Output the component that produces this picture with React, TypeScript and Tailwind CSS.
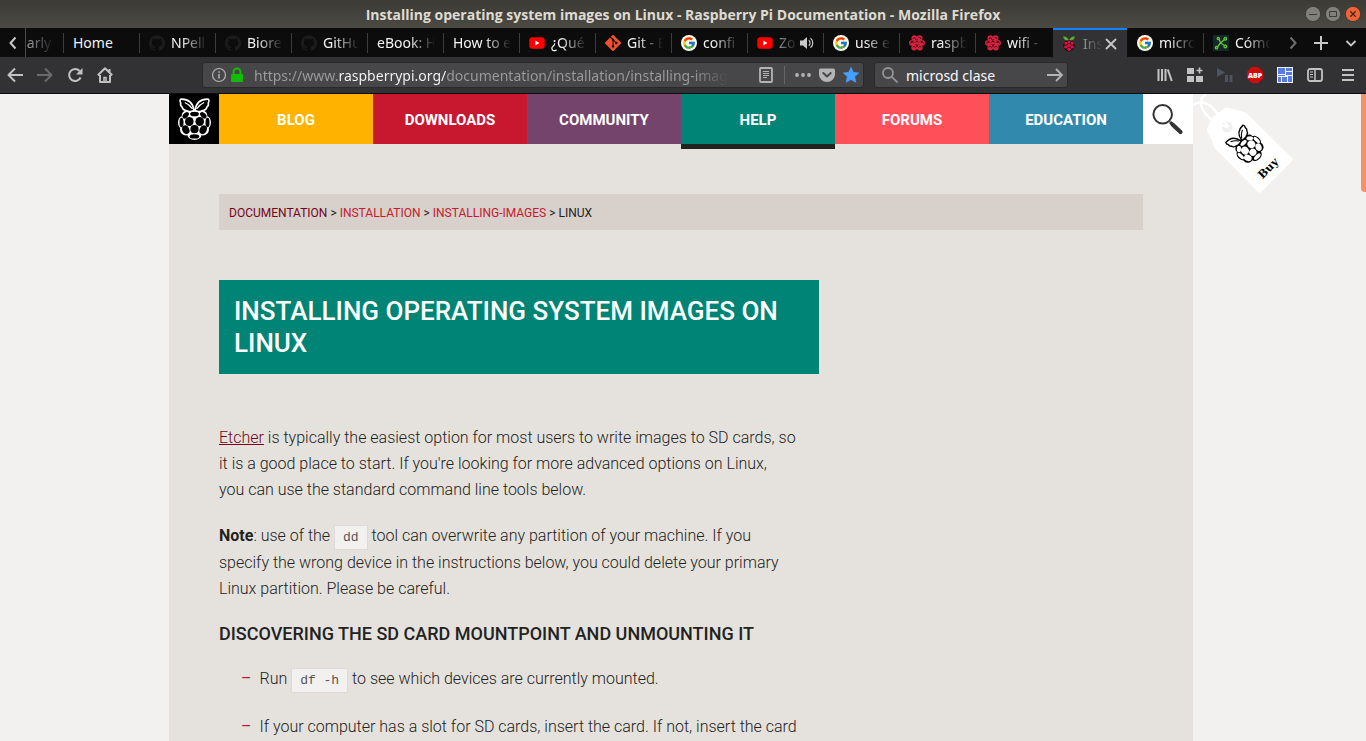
import React from "react";
import { SiGithub, SiGit } from "react-icons/si";
import { FcGoogle } from "react-icons/fc";

type TabData = {
  label: string;
  icon?: React.ReactNode;
  state?: "active" | "audio";
  bare?: boolean;
};

const GithubIcon = () => <SiGithub className="size-4 text-[#1c1c1c]" />;

const GoogleIcon = () => (
  <span className="flex size-4 items-center justify-center rounded-full bg-white">
    <FcGoogle className="size-[14px]" />
  </span>
);

const YoutubeIcon = () => (
  <svg viewBox="0 0 16 16" className="size-4">
    <rect x="0.3" y="2.3" width="15.4" height="11.4" rx="3" fill="#f00" />
    <path d="M6.3 5.6v4.8L10.4 8z" fill="#fff" />
  </svg>
);

const BerryIcon = () => (
  <svg viewBox="0 0 16 16" className="size-4">
    <g fill="#d8223f">
      <circle cx="8" cy="8" r="4" />
      <circle cx="5.4" cy="3.2" r="2.9" />
      <circle cx="10.600" cy="3.2" r="2.9" />
      <circle cx="2.900" cy="7.800" r="2.9" />
      <circle cx="13.100" cy="7.800" r="2.9" />
      <circle cx="5.200" cy="12.600" r="2.9" />
      <circle cx="10.800" cy="12.600" r="2.9" />
    </g>
    <g fill="none" stroke="#1c0408" strokeWidth=".8">
      <path d="M4 3.800c.5-1.500 2.300-1.500 2.500 0s1.500 1.700 2.500.6M9.500 3c1-1 2.600-.4 2.600 1" />
      <path d="M1.600 8.500c0-1.800 2.400-2 2.800-.4M6 7.600c.6-1.600 3.400-1.600 4 0M6.500 9.400c.8.9 2.200.9 3 0M11.700 8c.4-1.400 2.600-1.200 2.700.4" />
      <path d="M3.700 12.300c.8-1.300 2.600-1 2.800.4M9.500 12.700c.2-1.400 2-1.700 2.800-.4M7 11.500c.6-.6 1.400-.6 2 0M4.500 6c-1 .4-1.400.6-2.200.3M11.500 6c1 .4 1.400.6 2.200.3" />
    </g>
  </svg>
);

const RaspberryColorIcon = () => (
  <svg viewBox="0 0 16 16" className="size-4">
    <path d="M7.8 4.6C7.4 2 5 .2 2.200.5c.3 2.600 2.200 4.500 5.600 4.100zM8.200 4.600C8.600 2 11 .2 13.800.5c-.3 2.600-2.200 4.500-5.600 4.100z" fill="#5fb02c" />
    <path d="M8 4.200c3 0 5.600 2.300 5.600 5.400S10.800 15.600 8 15.600 2.400 12.700 2.400 9.600 5 4.200 8 4.200z" fill="#1b060b" />
    <g fill="#e0124a">
      <circle cx="8" cy="9.300" r="1.700" />
      <circle cx="8" cy="5.900" r="1.400" />
      <circle cx="4.900" cy="7.300" r="1.500" />
      <circle cx="11.100" cy="7.300" r="1.500" />
      <circle cx="4.800" cy="10.900" r="1.700" />
      <circle cx="11.200" cy="10.900" r="1.700" />
      <circle cx="8" cy="13.300" r="1.800" />
    </g>
  </svg>
);

const MoleculeIcon = () => (
  <svg viewBox="0 0 16 16" className="size-4">
    <rect width="16" height="16" fill="#16262a" />
    <g stroke="#5fc92e" strokeWidth="1.300" fill="none">
      <path d="M4 12.500 7.500 8 6 4M7.500 8l4-3.500M7.500 8l4 2.500" />
      <circle cx="3.500" cy="12.700" r="1.200" />
      <circle cx="5.300" cy="3.500" r="1.100" />
      <circle cx="12.300" cy="3.800" r="1.300" />
      <circle cx="12.300" cy="11.500" r="1.300" />
    </g>
  </svg>
);

/* Line drawing of a raspberry on a 50x50 grid, in an ink colour over a ground colour. */
function Raspberry({ ink, ground }: { ink: string; ground: string }) {
  return (
    <g>
      <g fill={ink}>
        <circle cx="25.500" cy="28.500" r="13.500" />
        <ellipse cx="13.500" cy="28.500" rx="4.500" ry="6.500" />
        <ellipse cx="37.500" cy="28.500" rx="4.500" ry="6.500" />
        <circle cx="17" cy="35.500" r="6" />
        <circle cx="34" cy="35.500" r="6" />
        <ellipse cx="25.500" cy="41" rx="7" ry="5" />
        <circle cx="17.700" cy="21.500" r="5" />
        <circle cx="33.300" cy="21.500" r="5" />
      </g>
      <g fill={ground}>
        <ellipse cx="20.300" cy="27.500" rx="4.300" ry="4.600" />
        <ellipse cx="30.700" cy="27.500" rx="4.300" ry="4.600" />
        <circle cx="25.500" cy="35.200" r="4.100" />
        <ellipse cx="12.500" cy="28.500" rx="2" ry="4.700" />
        <ellipse cx="38.500" cy="28.500" rx="2" ry="4.700" />
        <ellipse cx="16.800" cy="35.700" rx="3.500" ry="4.500" transform="rotate(-25 16.800 35.700)" />
        <ellipse cx="34.200" cy="35.700" rx="3.500" ry="4.500" transform="rotate(25 34.200 35.700)" />
        <ellipse cx="25.500" cy="42.400" rx="4.800" ry="2.200" />
        <ellipse cx="25.500" cy="20" rx="4.400" ry="2.300" />
        <ellipse cx="16.700" cy="21.300" rx="3.800" ry="2.400" transform="rotate(-45 16.700 21.300)" />
        <ellipse cx="34.300" cy="21.300" rx="3.800" ry="2.400" transform="rotate(45 34.300 21.300)" />
      </g>
      <g fill={ground} stroke={ink} strokeWidth="1.600" strokeLinejoin="round">
        <path d="M25 16.500C24 9.500 19.500 4.800 11.500 5.200c-1 1.500-.8 2.500.2 3.800-.6 2 .2 3.200 1.500 4.200.2 1.800 1.300 2.600 3 3 2.500 1.400 6 1.500 8.800.3z" />
        <path d="M26 16.500C27 9.500 31.500 4.800 39.500 5.200c1 1.500.8 2.500-.2 3.800.6 2-.2 3.200-1.500 4.200-.2 1.800-1.300 2.600-3 3-2.500 1.400-6 1.500-8.800.3z" />
        <path d="M23.500 15C21.500 12 19 9.800 15.800 8.500M27.500 15c2-3 4.500-5.200 7.700-6.500" fill="none" strokeWidth="1.200" />
      </g>
    </g>
  );
}

const tabs: TabData[] = [
  { label: "Home" },
  { label: "NPell", icon: <GithubIcon /> },
  { label: "Biore", icon: <GithubIcon /> },
  { label: "GitHu", icon: <GithubIcon /> },
  { label: "eBook: H" },
  { label: "How to e" },
  { label: "¿Qué", icon: <YoutubeIcon /> },
  { label: "Git - E", icon: <SiGit className="size-4 text-[#f0502f]" /> },
  { label: "confi", icon: <GoogleIcon /> },
  { label: "Zo", icon: <YoutubeIcon />, state: "audio" },
  { label: "use e", icon: <GoogleIcon /> },
  { label: "raspb", icon: <BerryIcon /> },
  { label: "wifi - ", icon: <BerryIcon /> },
  { label: "Ins", icon: <RaspberryColorIcon />, state: "active" },
  { label: "micro", icon: <GoogleIcon />, bare: true },
  { label: "Cómo", icon: <MoleculeIcon /> },
];

const fade = "[mask-image:linear-gradient(to_right,black_calc(100%_-_26px),transparent)]";

function Tab({ tab }: { tab: TabData }) {
  if (tab.state === "active") {
    return (
      <div className="ml-0.5 flex h-full w-[74px] shrink-0 items-center border-t-2 border-[#0a84ff] bg-[#323234] pr-2 pl-2">
        <button className="flex min-w-0 flex-1 items-center gap-[6px]">
          <span className="shrink-0">{tab.icon}</span>
          <span className={`flex-1 overflow-hidden text-left whitespace-nowrap text-[#b8b8ba] ${fade}`}>{tab.label}</span>
        </button>
        <button aria-label="Close tab">
          <svg viewBox="0 0 16 16" className="size-4" stroke="#c8c8c9" strokeWidth="1.800" strokeLinecap="round">
            <path d="M3.500 3.500l9 9M12.500 3.500l-9 9" />
          </svg>
        </button>
      </div>
    );
  }
  return (
    <button className="flex h-full w-[76px] shrink-0 items-center pr-2">
      <span className={tab.bare ? "h-5 w-px" : "h-5 w-px bg-[#3d3d3d]"} />
      {tab.icon && <span className="-mr-[3px] ml-[9px] shrink-0">{tab.icon}</span>}
      <span
        className={`ml-[9px] flex-1 overflow-hidden text-left whitespace-nowrap ${
          tab.label === "Home" ? "" : fade
        } ${tab.state === "audio" ? "text-[#b8b8ba]" : "text-[#f4f4f5]"}`}
      >
        {tab.label}
      </span>
      {tab.state === "audio" && (
        <svg viewBox="0 0 16 16" className="size-4 shrink-0" fill="#c9c9ca">
          <path d="M1 5.500h3L8 2v12L4 10.500H1z" />
          <path d="M9.800 5.300a3.500 3.500 0 0 1 0 5.400M11.500 3.300a6 6 0 0 1 0 9.400" fill="none" stroke="#c9c9ca" strokeWidth="1.200" />
        </svg>
      )}
    </button>
  );
}

function TitleBar() {
  return (
    <header className="grid h-7 shrink-0 grid-cols-[1fr_auto_1fr] items-center bg-gradient-to-b from-[#3b3a35] to-[#4c4a43]">
      <span />
      <h1 className="[font-family:'Open_Sans',sans-serif] text-[14px] font-bold text-[#dfdbd2]">
        Installing operating system images on Linux - Raspberry Pi Documentation - Mozilla Firefox
      </h1>
      <div className="flex justify-end gap-1 pr-[5px]">
        <button aria-label="Minimize">
          <svg viewBox="0 0 16 16" className="size-4">
            <circle cx="8" cy="8" r="7.600" fill="#82807a" stroke="#33322d" strokeWidth=".7" />
            <path d="M4 8.500h8" stroke="#3c3b37" />
          </svg>
        </button>
        <button aria-label="Maximize">
          <svg viewBox="0 0 16 16" className="size-4">
            <circle cx="8" cy="8" r="7.600" fill="#82807a" stroke="#33322d" strokeWidth=".7" />
            <path d="M4.500 5.500h7v5h-7z" fill="none" stroke="#3c3b37" />
          </svg>
        </button>
        <button aria-label="Close">
          <svg viewBox="0 0 16 16" className="size-4">
            <circle cx="8" cy="8" r="7.600" fill="#ee6436" stroke="#33322d" strokeWidth=".7" />
            <path d="M5.300 5.300l5.400 5.400M10.700 5.300l-5.400 5.400" stroke="#4a2312" strokeWidth="1.300" />
          </svg>
        </button>
      </div>
    </header>
  );
}

function TabBar() {
  return (
    <div className="flex h-[29px] shrink-0 bg-[#0c0c0d] text-[14px]">
      <button aria-label="Scroll tabs left" className="flex w-[26px] shrink-0 items-center justify-center border-r border-[#4a4a4b]">
        <svg viewBox="0 0 16 16" className="size-4" fill="none" stroke="#c8c8c9" strokeWidth="2">
          <path d="M10.500 2.500 5.500 8l5 5.500" />
        </svg>
      </button>
      <div className="flex min-w-0 flex-1 overflow-hidden">
        <div className="-ml-[39px] flex shrink-0">
          <button className="flex w-[76px] items-center pr-2 pl-8">
            <span className={`flex-1 overflow-hidden text-left whitespace-nowrap text-[#9a9a9c] ${fade}`}>Early</span>
          </button>
          {tabs.map((t, i) => (
            <Tab key={i} tab={t} />
          ))}
        </div>
      </div>
      <button aria-label="Scroll tabs right" className="flex w-7 shrink-0 items-center justify-center">
        <svg viewBox="0 0 16 16" className="size-4" fill="none" stroke="#6f6f71" strokeWidth="2">
          <path d="M5.500 2.500l5 5.500-5 5.500" />
        </svg>
      </button>
      <button aria-label="New tab" className="flex w-7 shrink-0 items-center justify-center">
        <svg viewBox="0 0 16 16" className="size-4" stroke="#c8c8c9" strokeWidth="2">
          <path d="M8 1v14M1 8h14" />
        </svg>
      </button>
      <button aria-label="List all tabs" className="flex w-[31px] shrink-0 items-center justify-center">
        <svg viewBox="0 0 16 16" className="size-4" fill="none" stroke="#c8c8c9" strokeWidth="1.800">
          <path d="M3.500 6 8 10.500 12.500 6" />
        </svg>
      </button>
    </div>
  );
}

function ToolButton({ label, children }: { label: string; children: React.ReactNode }) {
  return (
    <button aria-label={label} className="flex w-[30px] shrink-0 items-center justify-center">
      <svg viewBox="0 0 16 16" className="size-4" fill="none" stroke="#c2c2c3" strokeWidth="2">
        {children}
      </svg>
    </button>
  );
}

function Toolbar() {
  return (
    <div className="flex h-[37px] shrink-0 border-b border-[#0c0c0d] bg-[#323234] text-[14px]">
      <ToolButton label="Back">
        <path d="M16 8H1.500M8 1.500 1.500 8 8 14.500" strokeLinejoin="round" />
      </ToolButton>
      <ToolButton label="Forward">
        <path d="M0 8h14.500M8 1.500 14.500 8 8 14.500" stroke="#6b6b6d" strokeLinejoin="round" />
      </ToolButton>
      <ToolButton label="Reload">
        <path d="M13.600 10.500A6 6 0 1 1 12.600 4" />
        <path d="M15.500 1v6.500H9z" fill="#c2c2c3" stroke="none" />
      </ToolButton>
      <ToolButton label="Home">
        <path d="M.8 8.300 8 1.200l7.200 7.100M3 8v7h10V8M12.500 5V2" strokeLinejoin="round" />
        <path d="M7 15v-4.500h2V15" strokeWidth="1.500" />
      </ToolButton>

      <div className="w-[82px] shrink" />

      <div className="my-[5px] flex min-w-0 flex-1 items-center rounded-[3px] border border-[#29292b] bg-[#474749] pl-2">
        <button aria-label="Site information">
          <svg viewBox="0 0 16 16" className="size-4" fill="none" stroke="#b4b4b5">
            <circle cx="8" cy="8" r="6.500" strokeWidth="1.200" />
            <path d="M8 7v4.500M8 4.200v1.600" strokeWidth="1.500" />
          </svg>
        </button>
        <svg viewBox="0 0 16 16" className="ml-0.5 size-4">
          <path d="M4.500 8V5a3.500 3.500 0 0 1 7 0v3" fill="none" stroke="#12bc00" strokeWidth="2" />
          <rect x="2" y="7" width="12" height="8" rx="1" fill="#12bc00" />
        </svg>
        <input
          aria-label="Address"
          readOnly
          value="https://www.raspberrypi.org/documentation/installation/installing-images/linux.md"
          className="ml-[9px] h-full w-0 max-w-[474px] flex-1 bg-[linear-gradient(to_right,#9c9c9e_85px,#f9f9fa_85px,#f9f9fa_192px,#9c9c9e_192px,#9c9c9e_438px,transparent_474px)] bg-clip-text text-transparent outline-none"
        />
        <div className="ml-auto flex items-center pr-1">
          <button aria-label="Reader view">
            <svg viewBox="0 0 16 16" className="size-4" fill="none" stroke="#b4b4b5">
              <rect x="2" y="1" width="12" height="14" rx="1" strokeWidth="1.800" />
              <path d="M5 4.500h6M5 6.500h6M5 8.500h6M5 10.500h4" />
            </svg>
          </button>
          <span className="mx-[10px] h-[18px] w-px bg-[#65656a]" />
          <button aria-label="Page actions">
            <svg viewBox="0 0 16 16" className="size-4" fill="#b4b4b5">
              <circle cx="2" cy="8" r="1.900" />
              <circle cx="8" cy="8" r="1.900" />
              <circle cx="14" cy="8" r="1.900" />
            </svg>
          </button>
          <button aria-label="Save to Pocket" className="mx-2">
            <svg viewBox="0 0 16 16" className="size-4">
              <path d="M1.500 1.500h13A1.500 1.500 0 0 1 16 3v4.500a8 7.500 0 0 1-16 0V3a1.500 1.500 0 0 1 1.500-1.500z" fill="#b4b4b5" />
              <path d="M4.300 6 8 9.500 11.700 6" fill="none" stroke="#474749" strokeWidth="2" strokeLinecap="round" strokeLinejoin="round" />
            </svg>
          </button>
          <button aria-label="Edit bookmark">
            <svg viewBox="0 0 16 16" className="size-4">
              <path d="M8 .3l2.300 5 5.500.6-4.100 3.700 1.200 5.700L8 12.500l-4.900 2.800 1.200-5.700L.2 5.900l5.500-.6z" fill="#45a1ff" stroke="#45a1ff" strokeWidth=".6" strokeLinejoin="round" />
            </svg>
          </button>
        </div>
      </div>

      <div className="my-[5px] ml-[10px] flex w-[194px] shrink-0 items-center rounded-[3px] border border-[#29292b] bg-[#474749] pr-1 pl-[7px]">
        <svg viewBox="0 0 16 16" className="size-4 shrink-0" fill="none" stroke="#949496" strokeWidth="1.800">
          <circle cx="6" cy="6" r="5" />
          <path d="M9.800 9.800 15.500 15.500" />
        </svg>
        <input aria-label="Search" defaultValue="microsd clase" className="ml-2 h-full w-0 flex-1 bg-transparent text-[#f9f9fa] outline-none" />
        <button aria-label="Go">
          <svg viewBox="0 0 16 16" className="size-4" fill="none" stroke="#b4b4b5" strokeWidth="1.800">
            <path d="M0 8h15M9 2l6 6-6 6" />
          </svg>
        </button>
      </div>

      <div className="w-[82px] shrink" />

      <ToolButton label="Library">
        <path d="M1.500 2v12M5 2v12M8.500 2v12M10.800 2.500l4 11.500" />
      </ToolButton>
      <ToolButton label="Add-ons">
        <path d="M0 1h7v6H0zM0 9h7v6H0zM9 9h7v6H9z" fill="#c2c2c3" stroke="none" />
        <path d="M12.500.5v6M9.500 3.500h6" strokeWidth="1.700" />
      </ToolButton>
      <ToolButton label="Play or pause">
        <path d="M0 1l8 4.500L0 10zM8 8h3v7H8zM12.500 8h3v7h-3z" fill="#4c555f" stroke="none" />
      </ToolButton>
      <button aria-label="Adblock Plus" className="flex w-[30px] shrink-0 items-center justify-center">
        <svg viewBox="0 0 16 16" className="size-4">
          <path d="M4.700 0h6.600L16 4.700v6.600L11.300 16H4.700L0 11.300V4.700z" fill="#d20a0a" />
          <text x="8" y="10.700" textAnchor="middle" fill="#fff" className="[font-family:'Open_Sans',sans-serif] text-[7px] font-extrabold">ABP</text>
        </svg>
      </button>
      <ToolButton label="Tab groups">
        <path d="M0 0h16v16H0z" fill="#f1f3ff" stroke="none" />
        <path d="M1 1h7v6H1zM9 1h6v3H9zM9 5h6v3H9zM1 8h7v1H1zM1 10h3v5H1zM5 10h5v5H5zM11 9h4v6h-4z" fill="#5a7be0" stroke="none" />
      </ToolButton>
      <ToolButton label="Sidebars">
        <rect x="1" y="2" width="14" height="12" rx="2" strokeWidth="1.800" />
        <path d="M8 2v12" strokeWidth="1.500" />
        <path d="M3 5h3M3 7.500h3M3 10h3" strokeWidth="1" />
      </ToolButton>
      <button aria-label="Menu" className="flex w-9 shrink-0 items-center justify-center">
        <svg viewBox="0 0 16 16" className="size-4" stroke="#c2c2c3" strokeWidth="2">
          <path d="M2 3h12M2 8h12M2 13h12" />
        </svg>
      </button>
    </div>
  );
}

function BuyTag() {
  return (
    <a href="#buy" aria-label="Buy" className="absolute top-0 left-full">
      <svg viewBox="0 0 102 102" className="size-[102px]">
        <path d="M35 13.500 51 18q2 .5 3 1.500L99 64q1.500 1.500 0 3L68 98q-1.500 1.500-3 0L22 54.500 14.500 37q-.7-2 0-3.500L19 24q.7-1.500 2.500-2.500L32 14q1.500-1 3-.5z" fill="#fff" />
        <circle cx="34" cy="33" r="5.500" fill="#f1f0ee" />
        <path d="M0 11C10 5 18 11 24 19c4 5 8 9 11 13M12 1C6 5 7 12 12 19c5 7 13 12 22 14" fill="none" stroke="#fff" strokeWidth="2.500" strokeLinecap="round" />
        <g transform="translate(57 55.300) rotate(-45) scale(.87) translate(-25.500 -30.500)">
          <Raspberry ink="#000" ground="#fff" />
        </g>
        <text transform="translate(75 74) rotate(-45)" textAnchor="middle" y="4" className="[font-family:'DejaVu_Serif',serif] text-[11px] font-bold">
          Buy
        </text>
      </svg>
    </a>
  );
}

const navBase =
  "flex h-12 flex-1 box-content items-center justify-center pt-0.5 text-[15px] font-bold text-white";

function SiteNav() {
  return (
    <nav className="relative flex h-[50px]">
      <a href="#home" aria-label="Raspberry Pi" className="size-[50px] bg-black">
        <svg viewBox="0 0 50 50" className="size-[50px]">
          <Raspberry ink="#fff" ground="#000" />
        </svg>
      </a>
      <a href="#blog" className={`${navBase} bg-[#ffb300]`}>BLOG</a>
      <a href="#downloads" className={`${navBase} bg-[#c8182f]`}>DOWNLOADS</a>
      <a href="#community" className={`${navBase} bg-[#75446c]`}>COMMUNITY</a>
      <a href="#help" className={`${navBase} border-b-5 border-[#22251f] bg-[#008475]`}>HELP</a>
      <a href="#forums" className={`${navBase} bg-[#ff5059]`}>FORUMS</a>
      <a href="#education" className={`${navBase} bg-[#318aae]`}>EDUCATION</a>
      <button aria-label="Search site" className="size-[50px] bg-white">
        <svg viewBox="0 0 50 50" className="size-[50px]" fill="none" stroke="#333">
          <circle cx="19.700" cy="20.300" r="9.300" strokeWidth="2" />
          <path d="M27 28l3 3" strokeWidth="3" />
          <path d="M29.500 30.500l8 7.500" strokeWidth="4.200" strokeLinecap="round" />
        </svg>
      </button>
      <BuyTag />
    </nav>
  );
}

function Code({ children }: { children: React.ReactNode }) {
  return (
    <code className="border border-[#dbdbdb] bg-[#f2f1ef] px-2 py-1 [font-family:'Liberation_Mono',monospace] text-[13px] leading-6 text-[#555]">
      {children}
    </code>
  );
}

function ListItem({ children }: { children: React.ReactNode }) {
  return (
    <li className="flex gap-2 pl-[22px]">
      <span aria-hidden="true" className="font-normal text-[#c51a2f]">–</span>
      <span>{children}</span>
    </li>
  );
}

function Article() {
  return (
    <div className="px-[50px] pt-[50px]">
      <div className="bg-[#d8d0ca] px-[10px] pt-0.5 text-[12px] leading-[34px] text-[#222]">
        <a href="#documentation" className="text-[#75041a]">DOCUMENTATION</a> &gt;{" "}
        <a href="#installation" className="text-[#c51a2f]">INSTALLATION</a> &gt;{" "}
        <a href="#installing-images" className="text-[#c51a2f]">INSTALLING-IMAGES</a> &gt; LINUX
      </div>
      <h2 className="mt-[50px] max-w-[600px] bg-[#008475] p-[15px] text-[26px] leading-8 font-medium text-white">
        INSTALLING OPERATING SYSTEM IMAGES ON LINUX
      </h2>
      <div className="mt-[51px] max-w-[580px] text-[16px] leading-[26px] font-light text-[#222]">
        <p>
          <a href="#etcher" className="text-[#75041a] underline">Etcher</a> is typically the easiest option for most users to
          write images to SD cards, so it is a good place to start. If you're looking for more advanced options on Linux,
          <br />
          you can use the standard command line tools below.
        </p>
        <p className="mt-5">
          <strong className="font-bold">Note</strong>: use of the <Code>dd</Code> tool can overwrite any partition of your
          machine. If you specify the wrong device in the instructions below, you could delete your primary Linux partition.
          Please be careful.
        </p>
        <h3 className="mt-5 text-[18px] leading-6 font-medium">DISCOVERING THE SD CARD MOUNTPOINT AND UNMOUNTING IT</h3>
        <ul className="mt-5 flex flex-col gap-[21px]">
          <ListItem>
            Run <Code>df -h</Code> to see which devices are currently mounted.
          </ListItem>
          <ListItem>If your computer has a slot for SD cards, insert the card. If not, insert the card</ListItem>
        </ul>
      </div>
    </div>
  );
}

export default function App() {
  return (
    <div className="flex h-screen flex-col overflow-hidden [font-family:'Noto_Sans',sans-serif]">
      <TitleBar />
      <TabBar />
      <Toolbar />
      <div className="flex min-h-0 flex-1 bg-[#f2f1ef]">
        <main className="flex-1 overflow-hidden pl-px [font-family:Roboto,sans-serif]">
          <div className="mx-auto min-h-full max-w-[1024px] bg-[#e5e2dd]">
            <SiteNav />
            <Article />
          </div>
        </main>
        <div className="w-[5px]">
          <div className="h-[98px] rounded-bl-sm bg-[#f59068]" />
        </div>
      </div>
    </div>
  );
}
